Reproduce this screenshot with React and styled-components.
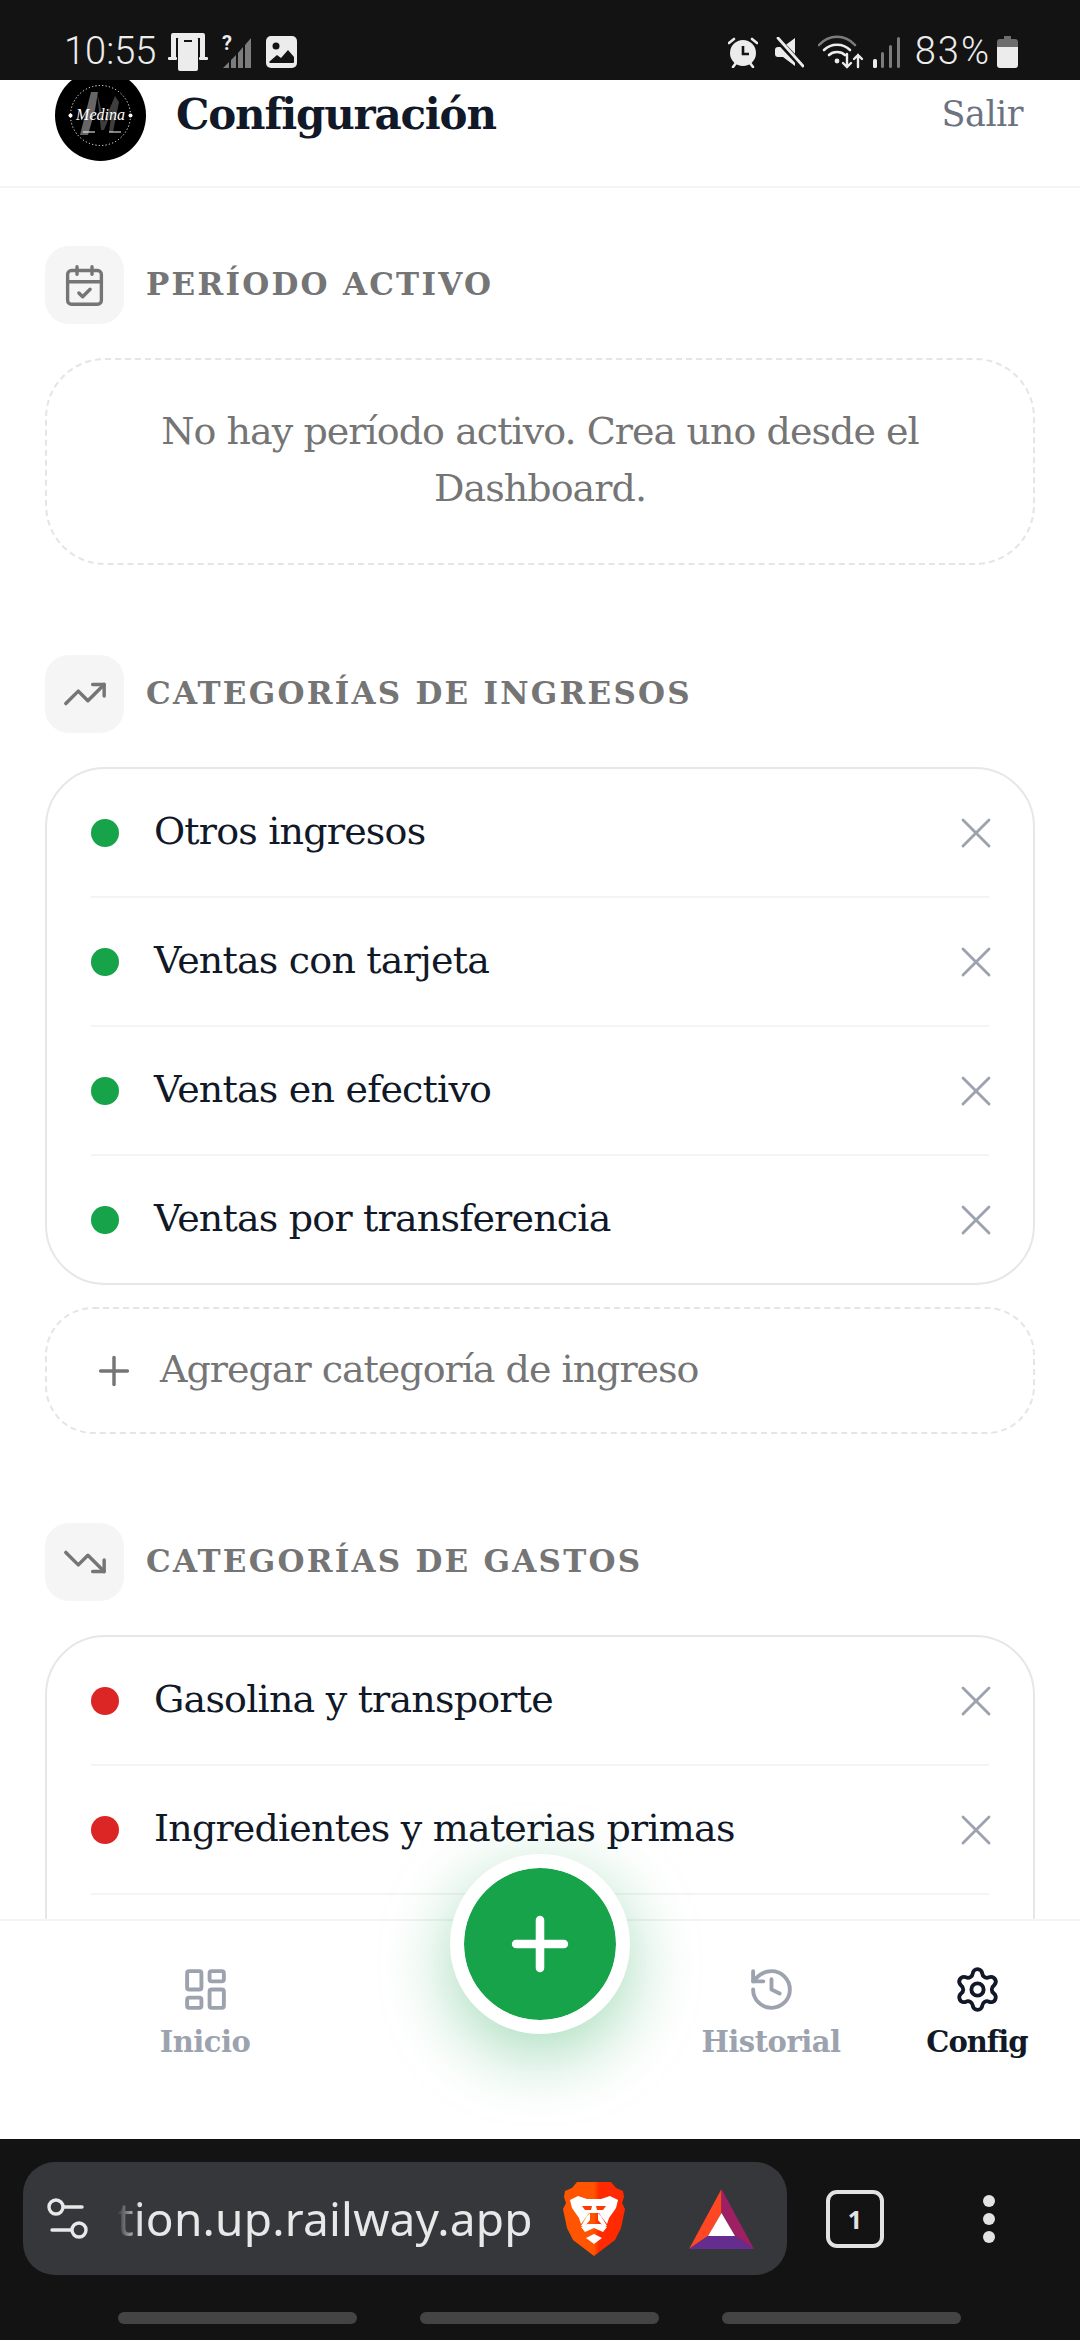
import React from "react";
import styled, { createGlobalStyle } from "styled-components";
import { CalendarCheck, TrendingUp, TrendingDown, X, Plus, LayoutDashboard, History, Settings } from "lucide-react";

const Global = createGlobalStyle`
  html, body { margin: 0; padding: 0; background: #fff; }
  * { box-sizing: border-box; }
`;

const serif = `"DejaVu Serif", "Liberation Serif", serif`;

const Screen = styled.div`
  width: 1080px; height: 2340px; display: flex; flex-direction: column; overflow: hidden;
  position: relative; font-family: ${serif}; background: #fff;
`;

const StatusBar = styled.div`
  height: 80px; flex: none; background: #131313; color: #ececec; display: flex; align-items: center;
  justify-content: space-between; padding: 24px 62px 0 64px; font-family: Roboto, "Noto Sans", sans-serif;
  position: relative; z-index: 2;
`;
const StatusGroup = styled.div`display: flex; align-items: center;`;
const Slot = styled.span`display: flex; margin-left: ${p => p.$ml || 0}px;`;
const StatusText = styled.span`font-size: 38px; font-weight: 300; line-height: 1.2; white-space: nowrap; flex: none; letter-spacing: ${p => p.$ls || 0}px; margin-left: ${p => p.$ml || 0}px;`;

const Main = styled.div`flex: 1; min-height: 0; overflow: hidden; display: flex; flex-direction: column;`;

const Header = styled.header`
  height: 108px; flex: none; display: flex; align-items: center; justify-content: space-between;
  padding: 0 57px 0 55px; border-bottom: 2px solid #f3f4f6; overflow: hidden;
`;
const HeaderLeft = styled.div`display: flex; align-items: center; gap: 30px; margin-top: -36px;`;
const Title = styled.h1`margin: 0; font-size: 42px; font-weight: 700; color: #111827; letter-spacing: -1.2px; line-height: 1.2;`;
const Salir = styled.span`font-size: 35px; color: #6b7280; margin-top: -38px; letter-spacing: -.5px;`;

const Content = styled.div`padding: 58px 45px 0; display: flex; flex-direction: column;`;
const Section = styled.section`display: flex; flex-direction: column; margin-bottom: ${p => p.$mb || 0}px;`;
const SectionHead = styled.div`display: flex; align-items: center; gap: 22px; height: 78px; margin-bottom: 34px;`;
const IconBox = styled.div`
  width: 79px; height: 78px; border-radius: 24px; background: #f5f5f5; color: #757575;
  display: flex; align-items: center; justify-content: center;
`;
const SectionTitle = styled.h2`margin: -3px 0 0; font-size: 31px; font-weight: 700; letter-spacing: 2.25px; color: #757575; text-transform: uppercase;`;

const EmptyCard = styled.div`
  border: 2px dashed #e5e5e5; border-radius: 60px; height: 207px; display: flex; align-items: center; justify-content: center;
  text-align: center; color: #757575; font-size: 38px; line-height: 57px; padding: 0 60px 4px; letter-spacing: -.95px;
`;

const Card = styled.div`border: 2px solid #e5e7eb; border-radius: 60px; padding: 0 44px; background: #fff;`;
const Row = styled.div`
  height: ${p => p.$first ? 127 : 129}px; display: flex; align-items: center; gap: 35px;
  border-top: ${p => p.$first ? "none" : "2px solid #f3f4f6"};
`;
const Dot = styled.span`width: 28px; height: 28px; border-radius: 50%; background: ${p => p.$color}; flex: none;`;
const RowLabel = styled.span`flex: 1; font-size: 38px; color: #111827; letter-spacing: -.8px; margin-top: -3px;`;
const Remove = styled.span`color: #9ca3af; display: flex; margin-right: -13px;`;

const AddCard = styled.div`
  margin-top: 22px; height: 127px; border: 2px dashed #e5e5e5; border-radius: 48px; display: flex; align-items: center;
  padding: 0 0 0 44px; gap: 23px; color: #757575; font-size: 38px; letter-spacing: -1px;
`;
const AddLabel = styled.span`margin-top: -3px;`;

const Nav = styled.nav`
  height: 220px; flex: none; border-top: 2px solid #f3f4f6; background: #fff; position: relative;
  display: grid; grid-template-columns: 410px 260px 202px 210px; padding-top: 44px; align-items: start;
`;
const NavItem = styled.div`
  display: flex; flex-direction: column; align-items: center; gap: 8px; color: ${p => p.$active ? "#111827" : "#9ca3af"};
`;
const NavLabel = styled.span`font-size: 29px; font-weight: 700; line-height: 40px; letter-spacing: ${p => p.$tight ? -1 : -.5}px;`;
const Fab = styled.div`
  position: absolute; left: 450px; top: -67px; width: 180px; height: 180px; border-radius: 50%; background: #16a34a;
  border: 14px solid #fff; display: flex; align-items: center; justify-content: center; color: #fff;
  box-shadow: 0 20px 70px rgba(22,163,74,.4);
  background-clip: padding-box;
`;

const BrowserBar = styled.div`
  height: 201px; flex: none; background: #131313; position: relative; padding: 23px 0 0 23px;
  display: flex; flex-direction: column; font-family: "Noto Sans", Roboto, sans-serif;
`;
const BarRow = styled.div`display: flex; align-items: center; height: 113px;`;
const UrlPill = styled.div`
  width: 764px; height: 113px; border-radius: 32px; background: #36373a; display: flex; align-items: center; padding: 0 0 0 23px; position: relative;
`;
const UrlText = styled.span`
  margin-left: 27px; width: 420px; color: #e8e8e8; font-size: 46px; letter-spacing: .2px; font-weight: 400; line-height: 1.4; white-space: nowrap; overflow: hidden;
  -webkit-mask-image: linear-gradient(90deg, transparent 0, #000 24px);
  mask-image: linear-gradient(90deg, transparent 0, #000 24px);
`;
const BraveSlot = styled.span`display: flex; margin-left: 26px;`;
const BatSlot = styled.span`display: flex; margin-left: 64px;`;
const TabCount = styled.div`
  margin-left: 39px; width: 58px; height: 58px; border: 4px solid #e3e3e3; border-radius: 11px; color: #e3e3e3;
  display: flex; align-items: center; justify-content: center; font-size: 25px; font-weight: 700;
`;
const Dots = styled.div`margin-left: 99px; display: flex; flex-direction: column; gap: 6px;`;
const MenuDot = styled.span`width: 12px; height: 12px; border-radius: 50%; background: #e3e3e3;`;
const HomeRow = styled.div`display: flex; gap: 63px; margin: 37px 0 0 95px;`;
const HomeBar = styled.span`width: 239px; height: 12px; border-radius: 6px; background: #444;`;

const PhoneLinkIcon = () => (
  <svg width="40" height="38" viewBox="0 0 40 38" fill="#ececec">
    <path d="M5 0h30a2 2 0 0 1 2 2v22h-5V5H8v19H3V2a2 2 0 0 1 2-2z" />
    <rect x="10" y="4" width="20" height="34" rx="2" />
    <rect x="16" y="7" width="8" height="2" fill="#131313" />
    <rect x="0" y="24" width="9" height="3" rx="1" />
    <rect x="31" y="24" width="9" height="3" rx="1" />
  </svg>
);
const NoSimSignal = () => (
  <svg width="34" height="34" viewBox="0 0 34 34" fill="#7c7c7c">
    <path d="M3 33 L9 27 V33z M11 25 L16 20 V33 H11z M18 18 L23 12 V33 H18z M25 10 L31 3 V33 H25z" />
    <text x="2" y="15" fontFamily="Roboto, sans-serif" fontSize="20" fontWeight="700" fill="#ececec">?</text>
  </svg>
);
const ImageIcon = () => (
  <svg width="31" height="32" viewBox="0 0 31 32">
    <rect width="31" height="32" rx="5" fill="#ececec" />
    <circle cx="10" cy="10" r="3.5" fill="#131313" />
    <path d="M3 26 L11 19 L15 22 L22 14 L28 21 V26 a1 1 0 0 1-1 1 H4z" fill="#131313" />
  </svg>
);
const AlarmIcon = () => (
  <svg width="30" height="32" viewBox="0 0 30 32">
    <circle cx="15" cy="17" r="13" fill="#ececec" />
    <path d="M15 10v8h6" stroke="#131313" strokeWidth="2.6" fill="none" />
    <path d="M1 7l5-4M29 7l-5-4" stroke="#ececec" strokeWidth="2.6" strokeLinecap="round" />
    <path d="M5 31l3-4M25 31l-3-4" stroke="#ececec" strokeWidth="2.6" strokeLinecap="round" />
  </svg>
);
const MuteIcon = () => (
  <svg width="30" height="31" viewBox="0 0 30 31">
    <path d="M21 1v28L9 20H4a3 3 0 0 1-3-3v-4a3 3 0 0 1 3-3h5z" fill="#ececec" />
    <path d="M2 1 L30 31" stroke="#131313" strokeWidth="6" />
    <path d="M4 1 L29 29" stroke="#ececec" strokeWidth="2.8" strokeLinecap="round" />
  </svg>
);
const WifiIcon = () => (
  <svg width="46" height="34" viewBox="0 0 46 34" fill="none" strokeLinecap="round">
    <path d="M1 10 C11 -1 27 -1 37 10" stroke="#7c7c7c" strokeWidth="2.6" />
    <path d="M6 15 C13 8 25 8 32 15" stroke="#ececec" strokeWidth="2.6" />
    <path d="M11 20 C15 16 23 16 27 20" stroke="#ececec" strokeWidth="2.6" />
    <circle cx="19" cy="26" r="2.4" fill="#ececec" />
    <path d="M29 19v13M25 28l4 4 4-4M40 32V20M36 24l4-4 4 4" stroke="#ececec" strokeWidth="2.4" />
  </svg>
);
const SignalIcon = () => (
  <svg width="27" height="31" viewBox="0 0 27 31">
    <rect x="0" y="22" width="4" height="9" rx="1.5" fill="#ececec" />
    <rect x="8" y="15" width="3" height="16" rx="1.5" fill="#7c7c7c" />
    <rect x="16" y="8" width="3" height="23" rx="1.5" fill="#7c7c7c" />
    <rect x="24" y="0" width="3" height="31" rx="1.5" fill="#7c7c7c" />
  </svg>
);
const BatteryIcon = () => (
  <svg width="21" height="32" viewBox="0 0 21 32">
    <path d="M7 0h7v3h4a3 3 0 0 1 3 3v5H0V6a3 3 0 0 1 3-3h4z" fill="#6d6d6d" />
    <path d="M0 11h21v18a3 3 0 0 1-3 3H3a3 3 0 0 1-3-3z" fill="#ececec" />
  </svg>
);

const Logo = () => (
  <svg width="91" height="91" viewBox="0 0 91 91" style={{ flex: "none" }}>
    <circle cx="45.5" cy="45.5" r="45.5" fill="#000" />
    <circle cx="45.5" cy="45.5" r="30" fill="none" stroke="#fff" strokeWidth="1" strokeDasharray="1.2 2.2" />
    <circle cx="15.5" cy="45.5" r="2" fill="#fff" />
    <circle cx="75.5" cy="45.5" r="2" fill="#fff" />
    <path d="M25 65 L36 22 L43 22 L40 40 L33 65z" fill="#666" />
    <path d="M42 22 L49 52 L60 26 L64 32 L58 62 L54 62 L57 40 L49 60 L46 60z" fill="#3e3e3e" />
    <text x="45.5" y="50" textAnchor="middle" fontFamily='"Liberation Serif", serif' fontStyle="italic" fontSize="16" fill="#fff">Medina</text>
    <path d="M28 62h12M54 62h12" stroke="#fff" strokeWidth="1" />
  </svg>
);

const SiteSettingsIcon = () => (
  <svg width="44" height="42" viewBox="0 0 44 42" fill="none" stroke="#e8e8e8" strokeWidth="3.4" strokeLinecap="round">
    <circle cx="10" cy="9" r="7" />
    <path d="M18 9h18" />
    <circle cx="33" cy="32" r="7" />
    <path d="M6 32h19" />
  </svg>
);

const BraveIcon = () => (
  <svg width="62" height="74" viewBox="0 0 62 74">
    <defs>
      <linearGradient id="brv" x1="0" x2="1" y1="0" y2="0">
        <stop offset="0" stopColor="#ff5500" />
        <stop offset=".5" stopColor="#ff5500" />
        <stop offset=".58" stopColor="#ff2a00" />
        <stop offset="1" stopColor="#ff2a00" />
      </linearGradient>
    </defs>
    <path d="M14 0H48L53 6 60 9 61 15 59 21 62 27 58 46 52 58 31 74 10 58 4 46 0 27 3 21 1 15 2 9 9 6z" fill="url(#brv)" />
    <path d="M7 18L15 14 24 17H38L47 14 55 18 53 26 46 36 44 42 38 34 36 31H26L24 34 18 42 16 36 9 26z" fill="#fff" />
    <path d="M19 24H29L28 28 22 28z M33 24H43L40 28 34 28z" fill="#ff3a00" />
    <path d="M27 31V38L22 44 18 44 24 34z M35 31V38L40 44 44 44 38 34z" fill="#fff" />
    <path d="M22 50L31 46 40 50 44 45 38 42H24L18 45z" fill="#fff" />
    <path d="M23 56L31 52 39 56 31 62z" fill="#fff" />
  </svg>
);

const BatIcon = () => (
  <svg width="65" height="60" viewBox="0 0 65 60">
    <polygon points="32.5,0 0,60 19,47 32.5,24" fill="#ff4724" />
    <polygon points="32.5,0 65,60 46,47 32.5,24" fill="#9e1f63" />
    <polygon points="0,60 65,60 46,47 19,47" fill="#662d91" />
    <polygon points="32.5,24 19,47 46,47" fill="#fff" />
  </svg>
);

const income = ["Otros ingresos", "Ventas con tarjeta", "Ventas en efectivo", "Ventas por transferencia"];
const expense = ["Gasolina y transporte", "Ingredientes y materias primas"];

const CategoryRows = ({ items, color }) =>
  items.map((label, i) => (
    <Row key={label} $first={i === 0}>
      <Dot $color={color} />
      <RowLabel>{label}</RowLabel>
      <Remove><X size={52} strokeWidth={1.3} /></Remove>
    </Row>
  ));

export default function App() {
  return (
    <Screen>
      <Global />
      <StatusBar>
        <StatusGroup>
          <StatusText>10:55</StatusText>
          <Slot $ml={12}><PhoneLinkIcon /></Slot>
          <Slot $ml={12}><NoSimSignal /></Slot>
          <Slot $ml={12}><ImageIcon /></Slot>
        </StatusGroup>
        <StatusGroup>
          <AlarmIcon />
          <Slot $ml={16}><MuteIcon /></Slot>
          <Slot $ml={14}><WifiIcon /></Slot>
          <Slot $ml={9}><SignalIcon /></Slot>
          <StatusText $ml={15} $ls={2}>83%</StatusText>
          <Slot $ml={6}><BatteryIcon /></Slot>
        </StatusGroup>
      </StatusBar>
      <Main>
        <Header>
          <HeaderLeft>
            <Logo />
            <Title>Configuración</Title>
          </HeaderLeft>
          <Salir>Salir</Salir>
        </Header>
        <Content>
          <Section $mb={90}>
            <SectionHead><IconBox><CalendarCheck size={45} strokeWidth={1.8} /></IconBox><SectionTitle>Período activo</SectionTitle></SectionHead>
            <EmptyCard>No hay período activo. Crea uno desde el Dashboard.</EmptyCard>
          </Section>
          <Section $mb={89}>
            <SectionHead><IconBox><TrendingUp size={46} strokeWidth={1.8} /></IconBox><SectionTitle>Categorías de ingresos</SectionTitle></SectionHead>
            <Card><CategoryRows items={income} color="#16a34a" /></Card>
            <AddCard><Plus size={46} strokeWidth={1.8} /><AddLabel>Agregar categoría de ingreso</AddLabel></AddCard>
          </Section>
          <Section>
            <SectionHead><IconBox><TrendingDown size={46} strokeWidth={1.8} /></IconBox><SectionTitle>Categorías de gastos</SectionTitle></SectionHead>
            <Card><CategoryRows items={expense} color="#dc2626" /><Row /></Card>
          </Section>
        </Content>
      </Main>
      <Nav>
        <NavItem><LayoutDashboard size={49} strokeWidth={1.9} /><NavLabel>Inicio</NavLabel></NavItem>
        <span />
        <NavItem><History size={49} strokeWidth={1.9} /><NavLabel>Historial</NavLabel></NavItem>
        <NavItem $active><Settings size={49} strokeWidth={1.9} /><NavLabel $tight>Config</NavLabel></NavItem>
        <Fab><Plus size={82} strokeWidth={2.5} /></Fab>
      </Nav>
      <BrowserBar>
        <BarRow>
          <UrlPill>
            <SiteSettingsIcon />
            <UrlText>tion.up.railway.app</UrlText>
            <BraveSlot><BraveIcon /></BraveSlot>
            <BatSlot><BatIcon /></BatSlot>
          </UrlPill>
          <TabCount>1</TabCount>
          <Dots><MenuDot /><MenuDot /><MenuDot /></Dots>
        </BarRow>
        <HomeRow><HomeBar /><HomeBar /><HomeBar /></HomeRow>
      </BrowserBar>
    </Screen>
  );
}
